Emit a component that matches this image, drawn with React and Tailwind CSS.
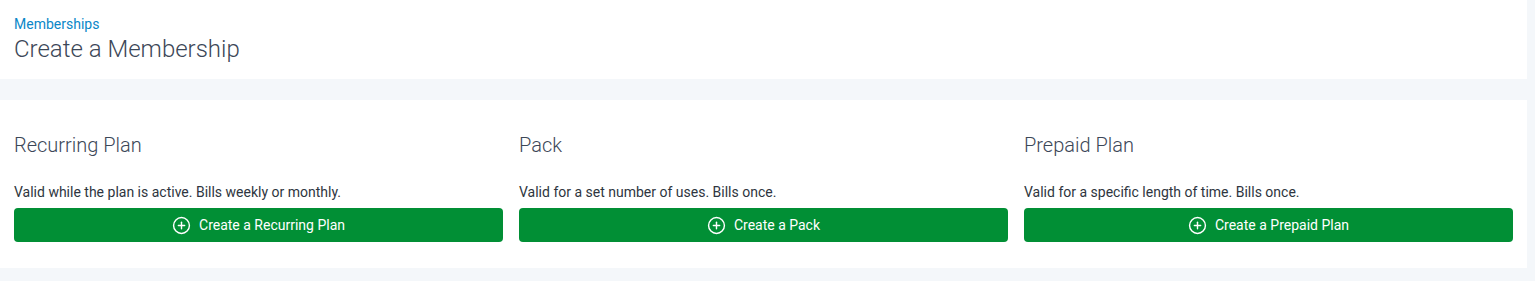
import React from "react";
import { CirclePlus } from "lucide-react";

const plans = [
  {
    title: "Recurring Plan",
    description: "Valid while the plan is active. Bills weekly or monthly.",
    action: "Create a Recurring Plan",
  },
  {
    title: "Pack",
    description: "Valid for a set number of uses. Bills once.",
    action: "Create a Pack",
  },
  {
    title: "Prepaid Plan",
    description: "Valid for a specific length of time. Bills once.",
    action: "Create a Prepaid Plan",
  },
];

function PlanOption({ plan }) {
  return (
    <div className="flex flex-col">
      <h2 className="text-[20px] leading-[26px] font-light text-[#3c4757]">
        {plan.title}
      </h2>
      <p className="mt-[26px] text-[14px] leading-[16px] text-[#2e3540]">
        {plan.description}
      </p>
      <button
        type="button"
        className="mt-[8px] h-[34px] w-full rounded-[4px] bg-[#018f35] text-white text-[14px] flex items-center justify-center gap-[8px]"
      >
        <CirclePlus size={19} strokeWidth={1.8} />
        <span>{plan.action}</span>
      </button>
    </div>
  );
}

export default function App() {
  return (
    <div
      className="min-h-screen bg-[#f4f7fa] pr-[8px]"
      style={{ fontFamily: "Roboto, 'Liberation Sans', sans-serif" }}
    >
      <div className="bg-white h-[79px] px-[14px] pt-[15px]">
        <a href="#" className="block text-[14px] leading-[18px] text-[#0a87c8]">
          Memberships
        </a>
        <h1 className="mt-[1px] text-[24px] leading-[30px] font-light text-[#3c4757]">
          Create a Membership
        </h1>
      </div>

      <div className="mt-[21px] bg-white px-[14px] pt-[32px] pb-[26px] grid grid-cols-3 gap-[16px]">
        {plans.map((plan) => (
          <PlanOption key={plan.title} plan={plan} />
        ))}
      </div>
    </div>
  );
}
